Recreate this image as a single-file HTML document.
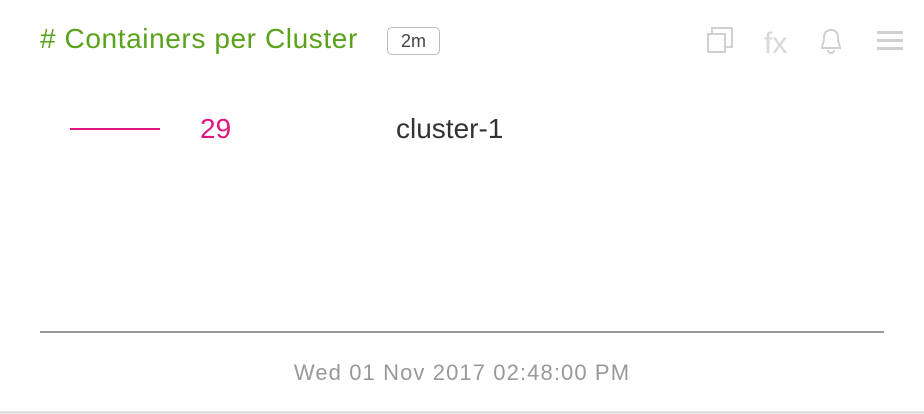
<!DOCTYPE html>
<html><head><style>
body{margin:0;width:924px;height:414px;background:#fff;font-family:"Liberation Sans",sans-serif;position:relative;overflow:hidden}
.a{position:absolute;white-space:nowrap}
</style></head><body>
<div class="a" style="left:40px;top:23px;font-size:28px;color:#5aa21b;letter-spacing:0.6px">#&nbsp;Containers per Cluster</div>
<div class="a" style="left:387px;top:27px;width:51px;height:26px;border:1.5px solid #bbb;border-radius:5px;font-size:18px;color:#444;text-align:center;line-height:26px">2m</div>
<svg class="a" style="left:700px;top:24px" width="210" height="34" viewBox="0 0 210 34">
<g fill="none" stroke="#d0d0d0" stroke-width="2">
<rect x="8" y="10" width="17" height="18"/>
<path d="M12 10V4h20v19h-7"/>
<path d="M122 24c0-4 2-4 2-10s3-8 7-8 7 2 7 8 2 6 2 10z"/><path d="M128 26a3 3 0 0 0 6 0"/>
</g>
<text x="64" y="29" font-size="30" fill="#d8d8d8" font-family="Liberation Sans">fx</text>
<g fill="#d0d0d0"><rect x="177" y="7" width="26" height="3"/><rect x="177" y="15" width="26" height="3"/><rect x="177" y="23" width="26" height="3"/></g>
</svg>
<div class="a" style="left:70px;top:128px;width:90px;height:2px;background:#e0157f"></div>
<div class="a" style="left:200px;top:113px;font-size:28px;color:#e0157f">29</div>
<div class="a" style="left:396px;top:113px;font-size:28px;color:#333">cluster-1</div>
<div class="a" style="left:40px;top:331px;width:844px;height:2px;background:#999"></div>
<div class="a" style="left:0;width:924px;top:360px;text-align:center;font-size:22px;letter-spacing:1.1px;color:#999">Wed 01 Nov 2017 02:48:00 PM</div>
<div class="a" style="left:0;top:411px;width:924px;height:3px;background:#e2e2e2"></div>
</body></html>
